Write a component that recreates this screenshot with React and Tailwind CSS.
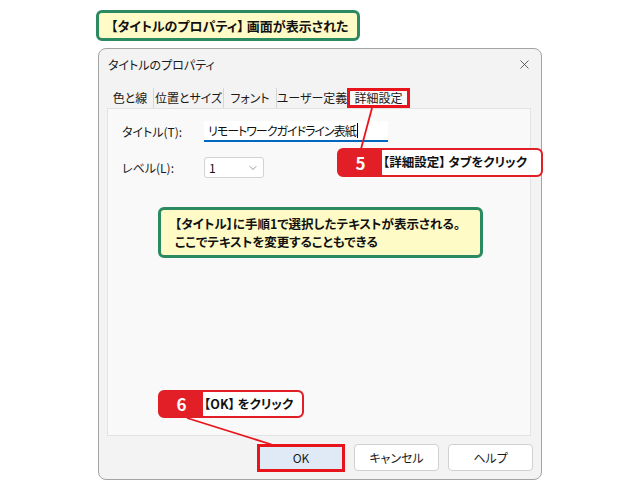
import React from "react";
import { X, ChevronDown } from "lucide-react";

const font = { fontFamily: '"Noto Sans CJK JP", "Noto Sans", sans-serif' };

function Tab({ label, w, active, sep }) {
  return (
    <div
      className={
        "h-[20px] flex items-center justify-center whitespace-nowrap text-[12px] text-[#1a1a1a] " +
        (active
          ? "bg-[#f9f9f9] border-[3px] border-[#e8141c]"
          : sep
          ? "border-r border-[#d6d6d6]"
          : "")
      }
      style={{ width: w }}
    >
      {label}
    </div>
  );
}

export default function App() {
  return (
    <div
      className="relative w-[640px] h-[480px] bg-white overflow-hidden [font-feature-settings:'palt']"
      style={font}
    >
      {/* top heading label */}
      <div className="ml-[96px] mt-[10px] w-[264px] h-[31px] rounded-[6px] border-[3px] border-[#2b8a62] bg-[#fffbc6] flex items-center pl-[12px] whitespace-pre text-[13px] font-bold text-[#111]">
        【タイトルのプロパティ】 画面が表示された
      </div>

      {/* dialog */}
      <div className="ml-[98px] mt-[7px] w-[444px] h-[432px] border border-[#a3a3a3] rounded-[8px] bg-[#f3f3f3] flex flex-col">
        <div className="h-[31px] flex items-center justify-between pl-[9px] pr-[9px] text-[12px] text-[#1a1a1a]">
          <span>タイトルのプロパティ</span>
          <X size={15} strokeWidth={1.2} className="text-[#333]" />
        </div>
        <div className="ml-[8px] mr-[10px] mt-[8px] flex flex-col">
          <div className="flex items-end h-[20px]">
            <Tab label="色と線" w={47} sep />
            <Tab label="位置とサイズ" w={70} sep />
            <Tab label="フォント" w={53} sep />
            <Tab label="ユーザー定義" w={70} />
            <Tab label="詳細設定" w={63} active />
          </div>
          <div className="h-[328px] bg-[#f9f9f9] border border-[#e3e3e3] pl-[14px] pt-[12px] flex flex-col gap-[15px]">
            <div className="flex items-center">
              <span className="w-[82px] text-[12px] text-[#1a1a1a]">タイトル(T):</span>
              <div className="w-[184px] h-[21px] bg-white border-b-2 border-[#0067c0] flex items-center pl-[4px] whitespace-nowrap text-[12px] tracking-[-1px] text-[#111]">
                リモートワークガイドライン表紙
                <span className="inline-block ml-[1px] w-px h-[15px] bg-black" />
              </div>
            </div>
            <div className="flex items-center">
              <span className="w-[82px] text-[12px] text-[#1a1a1a]">レベル(L):</span>
              <div className="w-[60px] h-[21px] bg-white border border-[#d3d3d3] rounded-[3px] flex items-center justify-between pl-[4px] pr-[4px] text-[12px] text-[#111]">
                <span>1</span>
                <ChevronDown size={12} strokeWidth={1.2} className="text-[#555]" />
              </div>
            </div>
          </div>
        </div>
        <div className="mt-[8px] mr-[8px] flex justify-end gap-[9px] text-[12px] text-[#1a1a1a]">
          <div className="w-[88px] h-[28px] bg-[#dfeaf6] border-[3px] border-[#e8141c] flex items-center justify-center">
            OK
          </div>
          <div className="w-[85px] h-[27px] bg-white border border-[#d0d0d0] rounded-[4px] flex items-center justify-center">
            キャンセル
          </div>
          <div className="w-[85px] h-[27px] bg-white border border-[#d0d0d0] rounded-[4px] flex items-center justify-center">
            ヘルプ
          </div>
        </div>
      </div>

      {/* connector lines */}
      <svg className="absolute left-0 top-0" width="640" height="480">
        <line x1="372" y1="108" x2="361" y2="149" stroke="#e8141c" strokeWidth="1.8" />
        <line x1="187" y1="418" x2="273" y2="445" stroke="#e8141c" strokeWidth="1.8" />
      </svg>

      {/* note box */}
      <div className="absolute left-[158px] top-[207px] w-[325px] h-[51px] rounded-[6px] border-[3px] border-[#2b8a62] bg-[#fffbc6] flex flex-col justify-center pl-[14px] whitespace-nowrap text-[12.5px] font-bold text-[#111] leading-[18px]">
        <div>【タイトル】に手順1で選択したテキストが表示される。</div>
        <div>ここでテキストを変更することもできる</div>
      </div>

      {/* callout 5 */}
      <div className="absolute left-[337px] top-[148px] w-[206px] h-[29px] rounded-[6px] bg-[#e21f26] border-2 border-[#e21f26] flex overflow-hidden">
        <div className="w-[43px] flex items-center justify-center text-white font-bold text-[17px]">5</div>
        <div className="flex-1 bg-white rounded-r-[4px] flex items-center pl-[1px] whitespace-pre text-[12.5px] font-bold text-[#111]">
          【詳細設定】 タブをクリック
        </div>
      </div>

      {/* callout 6 */}
      <div className="absolute left-[158px] top-[390px] w-[146px] h-[28px] rounded-[6px] bg-[#e21f26] border-2 border-[#e21f26] flex overflow-hidden">
        <div className="w-[43px] flex items-center justify-center text-white font-bold text-[17px]">6</div>
        <div className="flex-1 bg-white rounded-r-[4px] flex items-center pl-[1px] whitespace-pre text-[12.5px] font-bold text-[#111]">
          【OK】 をクリック
        </div>
      </div>
    </div>
  );
}
